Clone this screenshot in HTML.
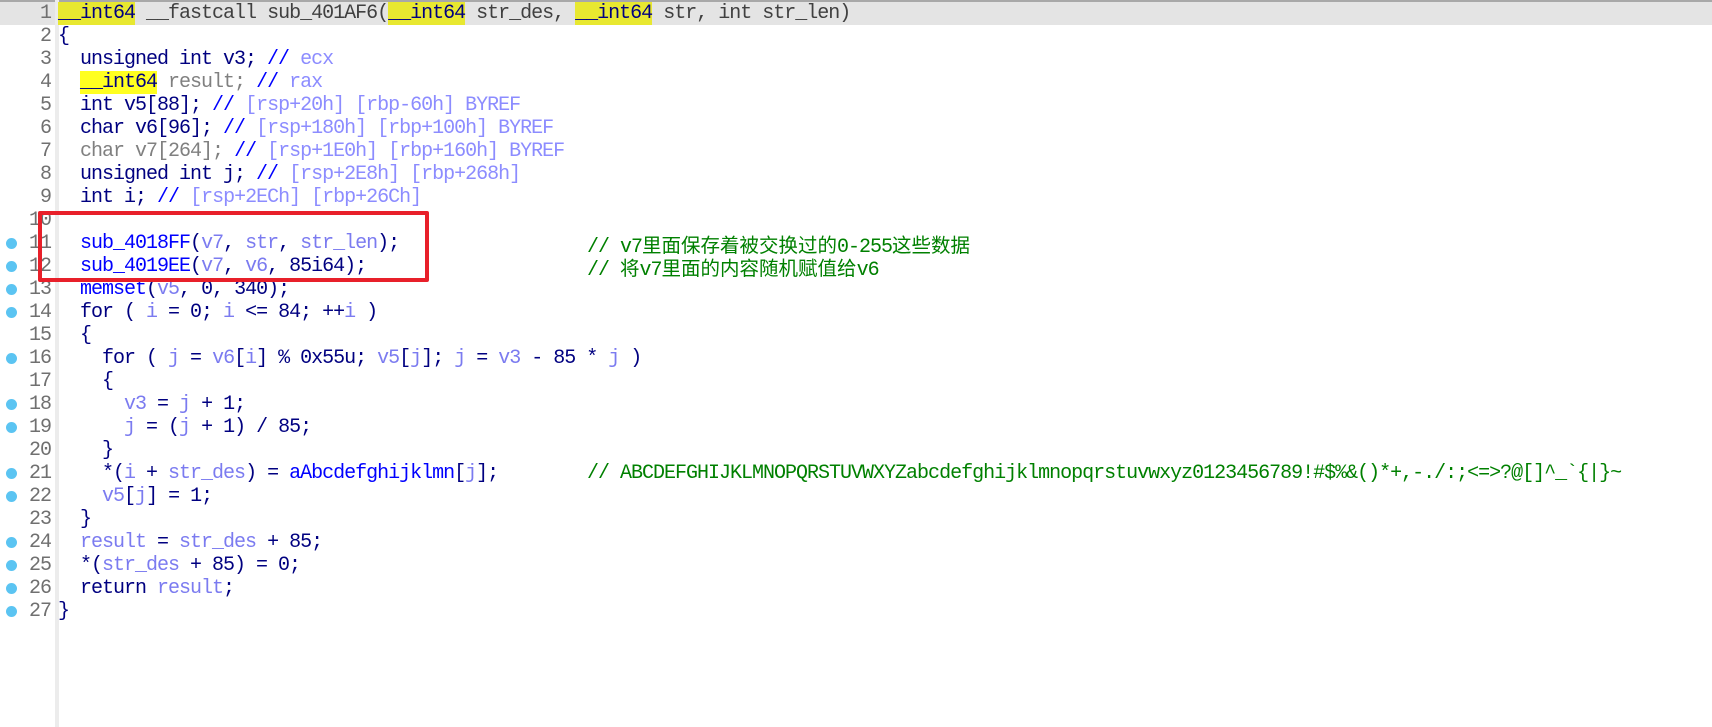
<!DOCTYPE html>
<html><head><meta charset="utf-8"><style>
html,body{margin:0;padding:0;background:#fff;width:1712px;height:727px;overflow:hidden;}
body{position:relative;font-family:"Liberation Mono","Noto Sans CJK SC",monospace;font-size:20px;letter-spacing:-1px;}
.hl{position:absolute;left:0;top:0;width:1712px;height:25px;background:#e4e4e4;border-top:2px solid #a8a8a8;box-sizing:border-box;}
.gut{position:absolute;left:55px;top:0;width:4px;height:727px;background:#ececec;}
.ln{position:absolute;left:0;height:23px;line-height:23px;white-space:pre;}
.n{position:absolute;left:0;width:51px;text-align:right;color:#707070;}
.c{position:absolute;left:58px;color:#000080;}
.cm{position:absolute;left:587px;color:#008000;}
.dot{position:absolute;left:6px;top:6px;width:11px;height:11px;border-radius:50%;background:#5bc4f2;}
.f{color:#0000ff}.v{color:#7b7bf0}.g{color:#808080}.b{color:#0000ff}.br{color:#8c8cff}
.y{background:#ffff20}.y1{background:#e8e830}
.box{position:absolute;left:38px;top:211px;width:391px;height:71px;border:4px solid #e8202a;box-sizing:border-box;border-radius:2px;}
.cjk{font-family:"Noto Sans CJK SC",sans-serif;letter-spacing:0;font-size:19.5px;}
</style></head><body>
<div class="hl"></div>
<div class="gut"></div>
<div class="ln" style="top:2px"><span class="n">1</span><span class="c"><span class="y1">__int64</span> <span style="color:#404040">__fastcall</span> <span style="color:#404040">sub_401AF6(</span><span class="y1">__int64</span> <span style="color:#404040">str_des,</span> <span class="y1">__int64</span> <span style="color:#404040">str, int str_len)</span></span></div>
<div class="ln" style="top:25px"><span class="n">2</span><span class="c">{</span></div>
<div class="ln" style="top:48px"><span class="n">3</span><span class="c">  unsigned int v3; <span class="b">//</span> <span class="br">ecx</span></span></div>
<div class="ln" style="top:71px"><span class="n">4</span><span class="c">  <span class="y">__int64</span> <span class="g">result;</span> <span class="b">//</span> <span class="br">rax</span></span></div>
<div class="ln" style="top:94px"><span class="n">5</span><span class="c">  int v5[88]; <span class="b">//</span> <span class="br">[rsp+20h] [rbp-60h] BYREF</span></span></div>
<div class="ln" style="top:117px"><span class="n">6</span><span class="c">  char v6[96]; <span class="b">//</span> <span class="br">[rsp+180h] [rbp+100h] BYREF</span></span></div>
<div class="ln" style="top:140px"><span class="n">7</span><span class="c">  <span class="g">char v7[264];</span> <span class="b">//</span> <span class="br">[rsp+1E0h] [rbp+160h] BYREF</span></span></div>
<div class="ln" style="top:163px"><span class="n">8</span><span class="c">  unsigned int j; <span class="b">//</span> <span class="br">[rsp+2E8h] [rbp+268h]</span></span></div>
<div class="ln" style="top:186px"><span class="n">9</span><span class="c">  int i; <span class="b">//</span> <span class="br">[rsp+2ECh] [rbp+26Ch]</span></span></div>
<div class="ln" style="top:209px"><span class="n">10</span></div>
<div class="ln" style="top:232px"><span class="dot"></span><span class="n">11</span><span class="c">  <span class="f">sub_4018FF</span>(<span class="v">v7</span>, <span class="v">str</span>, <span class="v">str_len</span>);</span><span class="cm">// v7<span class="cjk">里面保存着被交换过的</span>0-255<span class="cjk">这些数据</span></span></div>
<div class="ln" style="top:255px"><span class="dot"></span><span class="n">12</span><span class="c">  <span class="f">sub_4019EE</span>(<span class="v">v7</span>, <span class="v">v6</span>, 85i64);</span><span class="cm">// <span class="cjk">将</span>v7<span class="cjk">里面的内容随机赋值给</span>v6</span></div>
<div class="ln" style="top:278px"><span class="dot"></span><span class="n">13</span><span class="c">  <span class="f">memset</span>(<span class="v">v5</span>, 0, 340);</span></div>
<div class="ln" style="top:301px"><span class="dot"></span><span class="n">14</span><span class="c">  for ( <span class="v">i</span> = 0; <span class="v">i</span> &lt;= 84; ++<span class="v">i</span> )</span></div>
<div class="ln" style="top:324px"><span class="n">15</span><span class="c">  {</span></div>
<div class="ln" style="top:347px"><span class="dot"></span><span class="n">16</span><span class="c">    for ( <span class="v">j</span> = <span class="v">v6</span>[<span class="v">i</span>] % 0x55u; <span class="v">v5</span>[<span class="v">j</span>]; <span class="v">j</span> = <span class="v">v3</span> - 85 * <span class="v">j</span> )</span></div>
<div class="ln" style="top:370px"><span class="n">17</span><span class="c">    {</span></div>
<div class="ln" style="top:393px"><span class="dot"></span><span class="n">18</span><span class="c">      <span class="v">v3</span> = <span class="v">j</span> + 1;</span></div>
<div class="ln" style="top:416px"><span class="dot"></span><span class="n">19</span><span class="c">      <span class="v">j</span> = (<span class="v">j</span> + 1) / 85;</span></div>
<div class="ln" style="top:439px"><span class="n">20</span><span class="c">    }</span></div>
<div class="ln" style="top:462px"><span class="dot"></span><span class="n">21</span><span class="c">    *(<span class="v">i</span> + <span class="v">str_des</span>) = <span class="f">aAbcdefghijklmn</span>[<span class="v">j</span>];</span><span class="cm">// ABCDEFGHIJKLMNOPQRSTUVWXYZabcdefghijklmnopqrstuvwxyz0123456789!#$%&amp;()*+,-./:;&lt;=&gt;?@[]^_`{|}~</span></div>
<div class="ln" style="top:485px"><span class="dot"></span><span class="n">22</span><span class="c">    <span class="v">v5</span>[<span class="v">j</span>] = 1;</span></div>
<div class="ln" style="top:508px"><span class="n">23</span><span class="c">  }</span></div>
<div class="ln" style="top:531px"><span class="dot"></span><span class="n">24</span><span class="c">  <span class="v">result</span> = <span class="v">str_des</span> + 85;</span></div>
<div class="ln" style="top:554px"><span class="dot"></span><span class="n">25</span><span class="c">  *(<span class="v">str_des</span> + 85) = 0;</span></div>
<div class="ln" style="top:577px"><span class="dot"></span><span class="n">26</span><span class="c">  return <span class="v">result</span>;</span></div>
<div class="ln" style="top:600px"><span class="dot"></span><span class="n">27</span><span class="c">}</span></div>
<div class="box"></div>
</body></html>
